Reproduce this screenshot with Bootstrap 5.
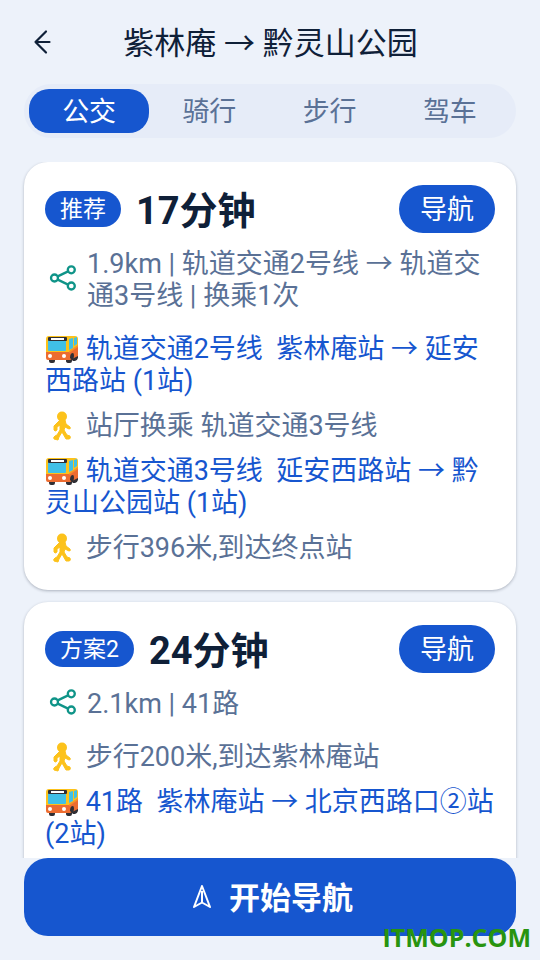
<!DOCTYPE html>
<html lang="zh-CN">
<head>
<meta charset="utf-8">
<meta name="viewport" content="width=device-width, initial-scale=1">
<title>紫林庵 → 黔灵山公园</title>
<link href="https://cdn.jsdelivr.net/npm/bootstrap@5.3.0/dist/css/bootstrap.min.css" rel="stylesheet">
<style>
:root { --blue: #1656cf; --ink: #0f2038; --slate: #5a7196; --page: #edf2fa; }
body { font-family: Roboto, "Noto Sans CJK SC", sans-serif; font-size: 27px; line-height: 32px; color: var(--slate); background: var(--page); }
svg { display: block; }
.screen { padding: 0 24px 24px; }
.topbar { height: 84px; }
.back-btn { width: 36px; height: 36px; padding: 0; }
.route-title { font-size: 31px; line-height: 40px; padding: 4px 0 0 1px; font-weight: 400; color: var(--ink); }
.mode-tabs { padding: 5px 6px 5px 5px; border-radius: 27px; background: #e6ecf8; margin-bottom: 24px; }
.mode-tabs .nav-link { height: 44px; padding: 1px 0 0; border-radius: 20px; color: var(--slate); line-height: 44px; }
.mode-tabs .nav-link.active { background: var(--blue); color: #fff; }
.plans { gap: 12px; margin: 0 -24px; padding: 0 24px; scrollbar-width: none; }
.plans::-webkit-scrollbar { display: none; }
.plan { flex-shrink: 0; border: 0; border-radius: 24px; padding: 23px 20px 26px 21px; color: var(--slate); box-shadow: 0 1px 3px rgba(20, 30, 50, .3); }
.plan:last-child { padding-bottom: 72px; }
.plan-head { gap: 15px; margin: 0 1px 15px 0; }
.plan-tag { font-size: 23px; line-height: 34px; font-weight: 400; padding: 2px 15px 0; background: var(--blue); border-radius: 18px; }
.plan-time { font-size: 38px; line-height: 44px; padding-top: 4px; font-weight: 700; color: var(--ink); }
.go-btn { width: 96px; height: 48px; padding: 2px 0 0; font-size: 27px; line-height: 46px; color: #fff; background: var(--blue); border: 0; border-radius: 24px; }
.plan-info { margin-bottom: 21px; gap: 6px; }
.plan-info svg { flex: none; width: 36px; height: 32px; }
.steps { gap: 13px; }
.ride { color: var(--blue); }
.steps svg { display: inline-block; width: 34px; height: 30px; margin: -3px 0 -1px; vertical-align: -5px; }
.start-btn { height: 78px; gap: 9px; padding: 4px 15px 0 12px; font-size: 31px; line-height: 40px; font-weight: 700; color: #fff; background: var(--blue); border: 0; border-radius: 24px; }
.btn:hover, .btn:active { color: #fff; background: var(--blue); }
.site-tag { right: 9px; bottom: 7px; font: 700 25px/32px "Open Sans", sans-serif; color: #28940f; }
</style>
<script src="https://cdn.jsdelivr.net/npm/bootstrap@5.3.0/dist/js/bootstrap.bundle.min.js"></script>
</head>
<body>
<svg width="0" height="0" class="position-absolute" aria-hidden="true">
  <symbol id="bus" viewBox="0 0 34 30">
    <path d="M4 24h6v3q0 2-2 2H6q-2 0-2-2zM21 24h6v3q0 2-2 2h-1q-3 0-3-2zM28 21h5v3q-1 3-3 3h-2z" fill="#302f35"/>
    <path d="M4 2h26q3 0 3 3v9l-9 6H1V5q0-3 3-3z" fill="#fcc21b"/>
    <path d="M1 18h23l9-6v10l-8 4H3q-2 0-2-2z" fill="#ed6c30"/>
    <path d="M24 19l9-6v-2l-9 6z" fill="#f79329"/>
    <rect x="3" y="6" width="18" height="11" rx="1" fill="#40c0e7"/>
    <path d="M24 5l4-1v10l-4 2zM29 4l3-1v7l-3 2z" fill="#40c0e7"/>
    <rect x="3" y="3" width="19" height="4" rx="1" fill="#302f35"/>
    <rect x="6" y="4" width="13" height="2" fill="#fff"/>
    <circle cx="5" cy="22" r="2" fill="#fff"/><circle cx="19" cy="22" r="2" fill="#fff"/>
    <path d="M25 24q0-5 3-5 1 0 1 3l-1 5z" fill="#302f35"/>
  </symbol>
  <symbol id="walk" viewBox="0 0 34 30">
    <circle cx="17" cy="5.500" r="5" fill="#fcc21b"/>
    <path d="M15 9h5l1 4 4 3q1 2-1 2l-4-2-1 3 3 5 3 1q1 3-1 3h-3l-4-7-3 5-1 3-4-1q-1-2 1-3l2-1 3-5v-5l-3 2v3q-2 2-3 0v-4z" fill="#fcc21b" stroke="#fcc21b" stroke-linejoin="round"/>
  </symbol>
  <symbol id="share" viewBox="0 4 36 32">
    <g fill="none" stroke="#0f9488" stroke-width="2.300"><circle cx="9.500" cy="18" r="3.500"/><circle cx="26.300" cy="9.800" r="3.500"/><circle cx="26.300" cy="26" r="3.500"/><path d="M12.700 16.400l10.400-5M12.700 19.600l10.400 5"/></g>
  </symbol>
</svg>
<div class="screen vh-100 d-flex flex-column position-relative">
  <header class="topbar d-flex align-items-center flex-shrink-0">
    <button type="button" class="back-btn btn border-0 bg-transparent" aria-label="返回">
      <svg width="36" height="36" viewBox="0 0 36 36" fill="none" stroke="#0f2038" stroke-width="2.200" stroke-linecap="round" stroke-linejoin="round"><path d="M22 7.500L11.500 18 22 28.500M11.500 18H25.500"/></svg>
    </button>
    <h1 class="route-title flex-grow-1 text-center text-nowrap m-0">紫林庵 → 黔灵山公园</h1>
    <span class="back-btn"></span>
  </header>
  <nav class="mode-tabs nav nav-pills nav-justified flex-nowrap flex-shrink-0">
    <a class="nav-link active" aria-current="page" href="#">公交</a>
    <a class="nav-link" href="#">骑行</a>
    <a class="nav-link" href="#">步行</a>
    <a class="nav-link" href="#">驾车</a>
  </nav>
  <main class="plans d-flex flex-column flex-grow-1 overflow-auto">
    <article class="plan card">
      <div class="plan-head d-flex align-items-center">
        <span class="plan-tag badge">推荐</span>
        <h2 class="plan-time m-0">17分钟</h2>
        <button type="button" class="go-btn btn ms-auto">导航</button>
      </div>
      <div class="plan-info d-flex align-items-center">
        <svg><use href="#share"/></svg>
        <span>1.9km | 轨道交通2号线 → 轨道交通3号线 | 换乘1次</span>
      </div>
      <ul class="steps list-unstyled d-flex flex-column m-0">
        <li class="ride"><svg><use href="#bus"/></svg> 轨道交通2号线&nbsp; 紫林庵站 → 延安西路站 (1站)</li>
        <li><svg><use href="#walk"/></svg> 站厅换乘 轨道交通3号线</li>
        <li class="ride"><svg><use href="#bus"/></svg> 轨道交通3号线&nbsp; 延安西路站 → 黔灵山公园站 (1站)</li>
        <li><svg><use href="#walk"/></svg> 步行396米,到达终点站</li>
      </ul>
    </article>
    <article class="plan card">
      <div class="plan-head d-flex align-items-center">
        <span class="plan-tag badge">方案2</span>
        <h2 class="plan-time m-0">24分钟</h2>
        <button type="button" class="go-btn btn ms-auto">导航</button>
      </div>
      <div class="plan-info d-flex align-items-center">
        <svg><use href="#share"/></svg>
        <span>2.1km | 41路</span>
      </div>
      <ul class="steps list-unstyled d-flex flex-column m-0">
        <li><svg><use href="#walk"/></svg> 步行200米,到达紫林庵站</li>
        <li class="ride"><svg><use href="#bus"/></svg> 41路&nbsp; 紫林庵站 → 北京西路口②站 (2站)</li>
      </ul>
    </article>
  </main>
  <button type="button" class="start-btn btn w-100 d-flex align-items-center justify-content-center flex-shrink-0">
    <svg width="36" height="36" viewBox="0 0 36 36" fill="none" stroke="#fff" stroke-width="2" stroke-linejoin="round"><path d="M18 5L10 26l8-4.500L26 26zM18 10v11.500"/></svg>
    开始导航
  </button>
  <span class="site-tag position-absolute">ITMOP.COM</span>
</div>
</body>
</html>
